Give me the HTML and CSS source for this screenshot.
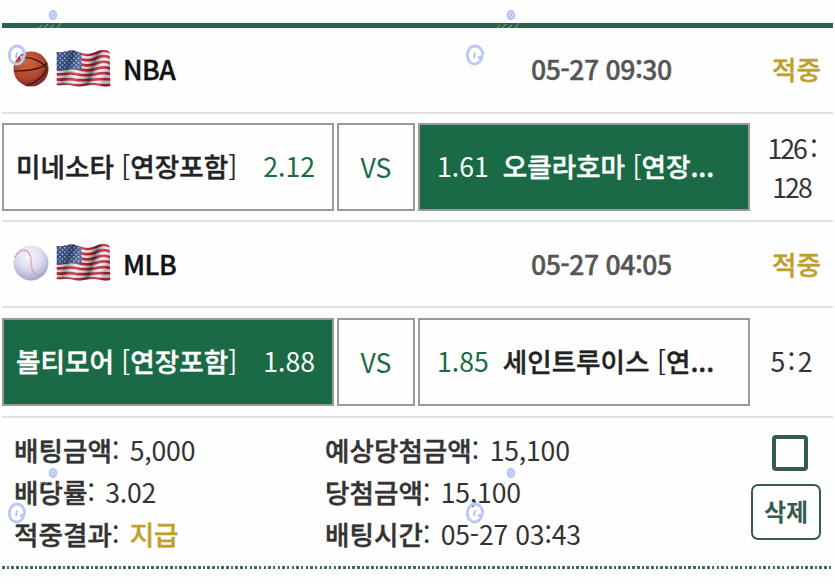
FILE: index.html
```
<!DOCTYPE HTML>
<html lang="ko">
	<head>
		<title>배팅내역</title>
		<meta charset="utf-8">
		<link rel="stylesheet" href="styles.css">
	</head>
	<body>
		<!-- shared icons -->
		<svg class="defs" width="0" height="0">
			<defs>
				<radialGradient id="orange" cx="38%" cy="32%" r="75%">
					<stop offset="0" stop-color="#d4643c"/>
					<stop offset="0.6" stop-color="#b1472d"/>
					<stop offset="1" stop-color="#6a2030"/>
				</radialGradient>
				<radialGradient id="white" cx="45%" cy="30%" r="75%">
					<stop offset="0" stop-color="#f8f6fb"/>
					<stop offset="0.5" stop-color="#dddcee"/>
					<stop offset="1" stop-color="#9a9cc6"/>
				</radialGradient>
				<linearGradient id="wave" x1="0" x2="1" y1="0" y2="0.25">
					<stop offset="0" stop-color="#000" stop-opacity="0"/>
					<stop offset="0.2" stop-color="#000" stop-opacity="0.1"/>
					<stop offset="0.32" stop-color="#000" stop-opacity="0.35"/>
					<stop offset="0.5" stop-color="#fff" stop-opacity="0.15"/>
					<stop offset="0.62" stop-color="#000" stop-opacity="0.1"/>
					<stop offset="0.74" stop-color="#000" stop-opacity="0.5"/>
					<stop offset="0.9" stop-color="#fff" stop-opacity="0.1"/>
					<stop offset="1" stop-color="#000" stop-opacity="0.25"/>
				</linearGradient>
				<pattern id="stars" width="4.6" height="4.6" patternUnits="userSpaceOnUse">
					<circle cx="1.3" cy="1.3" r="0.85" fill="#e4e9f5"/>
					<circle cx="3.6" cy="3.6" r="0.85" fill="#e4e9f5"/>
				</pattern>
				<clipPath id="cloth">
					<path d="M0 2C6 4 11 -1 19 1C27 4 32 5 39 2C45 -1 50 -1 53 2L54 36C48 38 43 35 36 35C28 35 24 38 17 36C11 34 6 36 0 35Z"/>
				</clipPath>
				<symbol id="basketball" viewBox="0 0 36 36">
					<circle cx="18" cy="18" r="17.5" fill="url(#orange)"/>
					<path d="M1 20C14 20 28 19 34 12M5 7C17 5 28 9 34 18M13 35C24 31 31 25 34 18" fill="none" stroke="#341416" stroke-width="1.2"/>
				</symbol>
				<symbol id="baseball" viewBox="0 0 36 36">
					<circle cx="18" cy="18" r="17.5" fill="url(#white)"/>
					<path d="M2 12C8 1 18 4 18 16C18 27 24 34 31 29" fill="none" stroke="#cf8d97" stroke-width="1.6" stroke-dasharray="1.2 0.8"/>
				</symbol>
				<symbol id="usa" viewBox="0 0 54 38">
					<g clip-path="url(#cloth)">
						<path d="M-1 -2H55V40H-1Z" fill="#f5eeee"/>
						<g fill="none" stroke="#c5283c" stroke-width="2.7">
							<path d="M-1 3C6 5 11 0 19 2C27 5 32 6 39 3C45 0 50 0 55 3"/>
							<path d="M-1 8.4C6 10.4 11 5.4 19 7.4C27 10.4 32 11.4 39 8.4C45 5.4 50 5.4 55 8.4"/>
							<path d="M-1 13.8C6 15.6 11 11 19 13C27 15.6 32 16.4 39 13.8C45 11 50 11 55 13.8"/>
							<path d="M-1 19C6 20.6 11 16.6 19 18.4C27 20.8 32 21.4 39 19C45 16.8 50 16.8 55 19"/>
							<path d="M-1 24.2C6 25.4 11 22.2 19 24C27 26 32 25.6 39 24.2C45 22.6 50 22.6 55 24.2"/>
							<path d="M-1 29.4C6 30.4 11 28 19 29.8C27 31 32 29.6 39 29.4C45 28.8 50 29.4 55 29.4"/>
							<path d="M-1 34.6C6 35.4 11 33.6 19 35.2C27 36 32 34 39 34.4C45 35 50 36 55 34.8"/>
						</g>
						<path d="M0 0H25V20C17 17 8 21 0 20.5Z" fill="#30508f"/>
						<path d="M1 1H24V19C17 17 8 20 1 19.5Z" fill="url(#stars)"/>
						<path d="M-1 -2H55V40H-1Z" fill="url(#wave)"/>
					</g>
				</symbol>
				<symbol id="mark" viewBox="0 0 56 66">
					<ellipse cx="45" cy="10" rx="3" ry="3.8" fill="#e4eafc" stroke="#b9c8f5" stroke-width="2.8"/>
					<path d="M45.3 8.5L44.7 11.5" stroke="#8da8ee" stroke-width="1"/>
					<path d="M31 23L34 20M36 23L40 19M42 23L46 20M49 23L53 18" stroke="#c3d0cb" stroke-width="0.9" opacity="0.7"/>
					<path d="M17 50C16 42 10 39.5 5.5 42C0.5 45 0 54 4.5 57.5C9 61 15 58 16 51.5L12 53" fill="none" stroke="#b9c8f5" stroke-width="2.8"/>
					<path d="M9 47.5L8 53" stroke="#a9bdf2" stroke-width="1.8"/>
				</symbol>
			</defs>
		</svg>

		<div class="bet">
			<div class="game first">
				<svg class="ball"><use href="#basketball"/></svg>
				<svg class="flag"><use href="#usa"/></svg>
				<span class="league">NBA</span>
				<span class="time">05-27 09:30</span>
				<span class="result">적중</span>
			</div>
			<div class="match">
				<div class="team home">
					<span class="name">미네소타 <i>[</i>연장포함<i>]</i></span>
					<span class="rate">2.12</span>
				</div>
				<div class="vs">VS</div>
				<div class="team away on">
					<span class="rate">1.61</span>
					<span class="name">오클라호마 <i>[</i>연장...</span>
				</div>
				<div class="score"><span>126 :</span><span>128</span></div>
			</div>
			<div class="game">
				<svg class="ball"><use href="#baseball"/></svg>
				<svg class="flag"><use href="#usa"/></svg>
				<span class="league">MLB</span>
				<span class="time">05-27 04:05</span>
				<span class="result">적중</span>
			</div>
			<div class="match last">
				<div class="team home on">
					<span class="name">볼티모어 <i>[</i>연장포함<i>]</i></span>
					<span class="rate">1.88</span>
				</div>
				<div class="vs">VS</div>
				<div class="team away">
					<span class="rate">1.85</span>
					<span class="name">세인트루이스 <i>[</i>연...</span>
				</div>
				<div class="score short"><span>5 : 2</span></div>
			</div>
			<div class="total">
				<ul class="left">
					<li><b>배팅금액</b>: <span>5,000</span></li>
					<li><b>배당률</b>: <span>3.02</span></li>
					<li><b>적중결과</b>: <span class="gold">지급</span></li>
				</ul>
				<ul class="right">
					<li><b>예상당첨금액</b>: <span>15,100</span></li>
					<li><b>당첨금액</b>: <span>15,100</span></li>
					<li><b>배팅시간</b>: <span>05-27 03:43</span></li>
				</ul>
				<div class="tool">
					<span class="check"></span>
					<button class="del">삭제</button>
				</div>
			</div>
			<div class="dots"></div>
		</div>

		<svg class="mark m1"><use href="#mark"/></svg>
		<svg class="mark m2"><use href="#mark"/></svg>
		<svg class="mark m3"><use href="#mark"/></svg>
		<svg class="mark m4"><use href="#mark"/></svg>
	</body>
</html>
```
FILE: styles.css
```
*{ margin:0; padding:0; box-sizing:border-box; }
body{ background:#fefefe; font-family:"Noto Sans CJK KR",sans-serif; font-size:26.6px; color:#333; overflow:hidden; }
li{ list-style:none; }
.defs{ display:block; }
.bet{ margin:23px 2px 0; border-top:5px solid #29634b; }

.game{ height:86px; display:flex; align-items:center; border-bottom:2px solid #e2e2e2; padding:0 12px 2px 11px; white-space:nowrap; }
.first{ padding-bottom:3px; }
.ball{ width:36px; height:36px; }
.flag{ width:55px; height:38px; margin-left:7px; }
.league{ width:408px; margin-left:12px; color:#111; letter-spacing:-0.5px; }
.time{ color:#555; letter-spacing:-0.5px; }
.result{ margin-left:auto; color:#bfa02a; }
.league,.time,.result,.name,.total b,.total .gold{ font-weight:500; -webkit-text-stroke:0.4px; }

.match{ height:108px; display:flex; align-items:center; border-bottom:2px solid #e2e2e2; }
.last{ height:110px; }
.team,.vs{ height:88px; display:flex; align-items:center; border:2px solid #999; white-space:nowrap; }
.team{ width:332px; padding:0 17px 3px 12px; }
.vs{ width:78px; margin:0 3px; padding-bottom:2px; justify-content:center; color:#1a6a45; }
.name{ color:#222; }
.name i{ font-style:normal; font-weight:400; -webkit-text-stroke:0; }
.rate{ color:#1a6a45; }
.home{ justify-content:space-between; }
.away{ padding:0 10px 3px 17px; }
.away .name{ margin-left:14px; }
.on{ background:#1a6a45; }
.on .name,.on .rate{ color:#fff; }
.score{ flex:1; padding-bottom:1px; text-align:center; line-height:39px; letter-spacing:-2px; word-spacing:-1px; }
.score span{ display:block; }
.short{ padding-bottom:3px; letter-spacing:0; word-spacing:-5px; }

.total{ height:148px; display:flex; padding:11px 12px 0; line-height:42px; white-space:nowrap; }
.total li span{ margin-left:3px; letter-spacing:-0.2px; }
.left{ width:311px; }
.total .gold{ color:#bfa02a; }
.tool{ margin-left:auto; display:flex; flex-direction:column; align-items:center; }
.check{ width:36px; height:36px; margin:6px 0 0 7px; border:4px solid #375b4c; border-radius:4px; }
.del{ width:70px; height:56px; margin-top:13px; padding-bottom:3px; border:2px solid #375b4c; border-radius:7px; background:#fff; color:#375b4c; font:700 24px "Noto Sans CJK KR",sans-serif; }
.dots{ height:3px; background:repeating-linear-gradient(90deg,#47695b 0,#47695b 2.6px,#fefefe 2.6px,#fefefe 4.67px); }

.mark{ position:absolute; width:56px; height:66px; pointer-events:none; }
.m1{ left:8px; top:5px; }
.m2{ left:466px; top:5px; }
.m3{ left:8px; top:463px; }
.m4{ left:466px; top:463px; }
```
